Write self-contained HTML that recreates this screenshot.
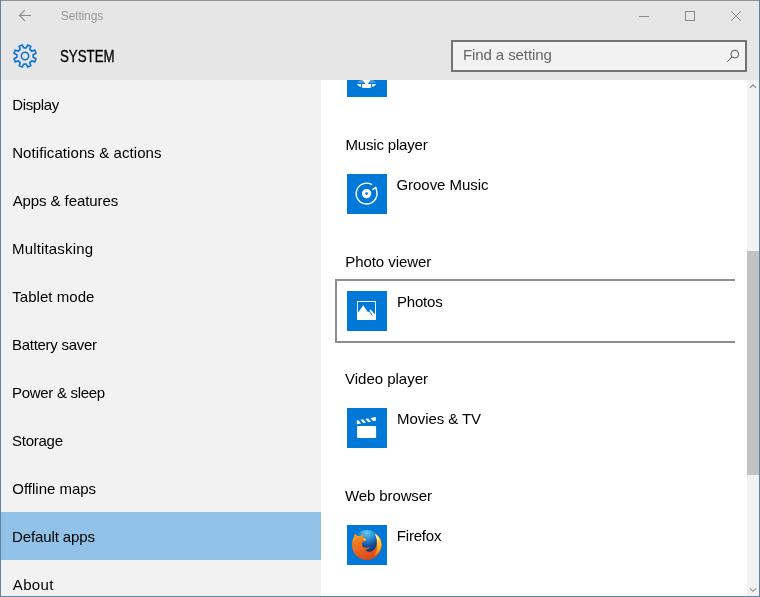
<!DOCTYPE html>
<html>
<head>
<meta charset="utf-8">
<title>Settings</title>
<style>
html,body{margin:0;padding:0;}
body{width:760px;height:597px;overflow:hidden;background:#fff;font-family:"Liberation Sans",sans-serif;position:relative;}
.abs{position:absolute;}
#win{will-change:transform;position:absolute;left:0;top:0;width:760px;height:597px;overflow:hidden;background:#fff;}
#header{left:0;top:0;width:760px;height:80px;background:#e6e6e6;}
#sidebar{left:0;top:80px;width:321px;height:517px;background:#f2f2f2;}
#content{left:321px;top:80px;width:426px;height:517px;background:#fff;overflow:hidden;}
#track{left:747px;top:80px;width:12px;height:517px;background:#f2f2f2;}
#thumb{left:747px;top:251px;width:12px;height:224px;background:#c2c2c2;}
.t{position:absolute;white-space:nowrap;line-height:20px;font-size:15px;color:#000;transform-origin:0 50%;}
.nav{left:12px;}
.sel{left:1px;top:512px;width:320px;height:48px;background:#91c1e7;}
.ico{position:absolute;left:347px;width:40px;height:40px;background:#0078d7;}
.bl{left:0;top:0;width:1px;height:597px;background:#62839f;}
.br{left:759px;top:0;width:1px;height:597px;background:#62839f;}
.bt{left:0;top:0;width:760px;height:1px;background:#8f8f8f;}
.bb{left:0;top:596px;width:760px;height:1px;background:#62839f;}
</style>
</head>
<body>
<div id="win">
  <div id="header" class="abs"></div>
  <div id="sidebar" class="abs"></div>
  <div id="content" class="abs"><div class="ico" id="i0" style="left:26px;top:-23px;"><svg width="40" height="40" viewBox="0 0 40 40" style="position:absolute;left:0;top:0">
<defs><clipPath id="mlo"><rect x="0" y="26.9" width="40" height="10"/></clipPath><clipPath id="mup"><rect x="0" y="20" width="40" height="5.8"/></clipPath></defs>
<ellipse cx="19.5" cy="26.4" rx="9.7" ry="4.4" fill="#fff" clip-path="url(#mlo)"/>
<ellipse cx="19.5" cy="26.4" rx="9.4" ry="4.2" fill="#fff" opacity="0.32" clip-path="url(#mup)"/>
<path d="M15.2 22.5H23.8L21 26.4L23.8 30.9H15.2L18.2 26.4Z" fill="#fff"/>
<path d="M14.6 27V30.6M24.6 27V30.6" stroke="#0078d7" stroke-width="1"/>
</svg></div></div>
  <div id="track" class="abs"></div>
  <div id="thumb" class="abs"></div>

  <!-- title bar -->
  <svg class="abs" style="left:17px;top:8px" width="16" height="16" viewBox="0 0 16 16" fill="none" stroke="#8a8a8a" stroke-width="1.1">
    <path d="M2.5 7.5H14M7.8 2.2L2.5 7.5L7.8 12.8"/>
  </svg>
  <div class="t" id="ttl" style="left:60.8px;top:6px;font-size:12px;color:#999;letter-spacing:-0.14px;">Settings</div>
  <svg class="abs" style="left:630px;top:4px" width="120" height="24" viewBox="0 0 120 24" fill="none" stroke="#8a8a8a" stroke-width="1">
    <path d="M9 12.5H19"/>
    <rect x="55.5" y="7.5" width="9" height="9"/>
    <path d="M101 7L111 17M111 7L101 17"/>
  </svg>

  <!-- gear + SYSTEM -->
  <svg class="abs" style="left:11px;top:42px" width="28" height="28" viewBox="-14 -14 28 28" fill="none" stroke="#0c74d4" stroke-width="1.6" stroke-linejoin="round">
    <path d="M8.10,1.28 L11.06,2.76 L9.77,5.87 L6.63,4.82 L4.82,6.63 L5.87,9.77 L2.76,11.06 L1.28,8.10 L-1.28,8.10 L-2.76,11.06 L-5.87,9.77 L-4.82,6.63 L-6.63,4.82 L-9.77,5.87 L-11.06,2.76 L-8.10,1.28 L-8.10,-1.28 L-11.06,-2.76 L-9.77,-5.87 L-6.63,-4.82 L-4.82,-6.63 L-5.87,-9.77 L-2.76,-11.06 L-1.28,-8.10 L1.28,-8.10 L2.76,-11.06 L5.87,-9.77 L4.82,-6.63 L6.63,-4.82 L9.77,-5.87 L11.06,-2.76 L8.10,-1.28Z"/>
    <circle cx="0" cy="0" r="3.7"/>
  </svg>
  <div class="t" id="sys" style="left:59.5px;top:46.5px;font-size:16px;transform:scaleX(0.83);-webkit-text-stroke:0.3px #000;">SYSTEM</div>

  <!-- search -->
  <div class="abs" style="left:451px;top:40px;width:292px;height:28px;border:2px solid #737373;background:#f2f2f2;"></div>
  <div class="t" id="find" style="left:462.9px;top:45px;color:#666;letter-spacing:-0.08px;">Find a setting</div>
  <svg class="abs" style="left:724px;top:46px" width="18" height="18" viewBox="0 0 18 18" fill="none" stroke="#555" stroke-width="1">
    <circle cx="10.8" cy="8.1" r="3.9"/><path d="M8 11L3.2 15.8"/>
  </svg>

  <!-- sidebar -->
  <div class="abs sel"></div>
  <div class="t nav" id="n0" style="top:95px;left:12.2px;letter-spacing:-0.35px;">Display</div>
  <div class="t nav" id="n1" style="top:143px;left:12.20px;letter-spacing:0.08px;">Notifications &amp; actions</div>
  <div class="t nav" id="n2" style="top:191px;left:12.70px;letter-spacing:-0.09px;">Apps &amp; features</div>
  <div class="t nav" id="n3" style="top:239px;left:12.00px;letter-spacing:0.17px;">Multitasking</div>
  <div class="t nav" id="n4" style="top:287px;left:12.30px;letter-spacing:0.04px;">Tablet mode</div>
  <div class="t nav" id="n5" style="top:335px;left:12.00px;letter-spacing:-0.28px;">Battery saver</div>
  <div class="t nav" id="n6" style="top:383px;left:12.00px;letter-spacing:-0.30px;">Power &amp; sleep</div>
  <div class="t nav" id="n7" style="top:431px;left:12.00px;letter-spacing:-0.25px;">Storage</div>
  <div class="t nav" id="n8" style="top:479px;left:12.30px;letter-spacing:-0.01px;">Offline maps</div>
  <div class="t nav" id="n9" style="top:527px;left:11.90px;letter-spacing:-0.09px;">Default apps</div>
  <div class="t nav" id="n10" style="top:575px;left:12.85px;letter-spacing:0.32px;">About</div>

  <!-- content -->

  <div class="t" id="h1" style="left:345.40px;top:135px;letter-spacing:-0.17px;">Music player</div>
  <div class="ico" id="i1" style="top:174px;"><svg width="40" height="40" viewBox="0 0 40 40" style="position:absolute;left:0;top:0" fill="none" stroke="#fff" stroke-width="1.45" stroke-linecap="round" stroke-linejoin="round">
<path d="M24.48 10.42A10.4 10.4 0 1 0 29.77 17.44L28.9 13.4L25.9 15.4"/>
<circle cx="19.6" cy="19.6" r="3.05" stroke-width="3.3"/>
</svg></div>
  <div class="t" id="a1" style="left:396.50px;top:175px;letter-spacing:-0.05px;">Groove Music</div>

  <div class="abs" style="left:335px;top:279px;width:420px;height:60px;border:2px solid #8e8e8e;clip-path:inset(0 24px 0 0);"></div>
  <div class="t" id="h2" style="left:345.30px;top:252px;letter-spacing:-0.07px;">Photo viewer</div>
  <div class="ico" id="i2" style="top:291px;"><svg width="40" height="40" viewBox="0 0 40 40" style="position:absolute;left:0;top:0">
<rect x="10.5" y="10.5" width="18" height="18" fill="none" stroke="#fff" stroke-width="1"/>
<path d="M10 29V23.2L16.2 14.3L21.2 21.4L23.5 18.2L29 24.8V29Z" fill="#fff"/>
<path d="M21.9 19.4L25.2 24.4" stroke="#0078d7" stroke-width="0.9"/>
</svg></div>
  <div class="t" id="a2" style="left:396.90px;top:292px;letter-spacing:-0.18px;">Photos</div>

  <div class="t" id="h3" style="left:345.00px;top:369px;letter-spacing:-0.01px;">Video player</div>
  <div class="ico" id="i3" style="top:408px;"><svg width="40" height="40" viewBox="0 0 40 40" style="position:absolute;left:0;top:0">
<rect x="10.1" y="17.9" width="19" height="12.1" rx="1" fill="#fff"/>
<path d="M9.6 12.5L28.8 8.9V12.7L9.9 16.3Z" fill="#fff"/>
<path d="M12 11.4L15.8 16M16.9 10.5L20.7 15.1M21.8 9.6L25.6 14.2" stroke="#0078d7" stroke-width="2"/>
</svg></div>
  <div class="t" id="a3" style="left:397.00px;top:409px;letter-spacing:-0.07px;">Movies &amp; TV</div>

  <div class="t" id="h4" style="left:345.00px;top:486px;letter-spacing:-0.11px;">Web browser</div>
  <div class="ico" id="i4" style="top:525px;"><svg width="40" height="40" viewBox="0 0 40 40" style="position:absolute;left:0;top:0">
<defs>
<radialGradient id="gl" cx="0.5" cy="0.08" r="0.8"><stop offset="0" stop-color="#6cc8f0"/><stop offset="0.3" stop-color="#2f9adb"/><stop offset="0.62" stop-color="#14509c"/><stop offset="1" stop-color="#0c2c6c"/></radialGradient>
<linearGradient id="fx" x1="0.2" y1="0" x2="0.6" y2="1"><stop offset="0" stop-color="#f58f22"/><stop offset="0.45" stop-color="#ee6f1c"/><stop offset="1" stop-color="#d8431b"/></linearGradient>
<linearGradient id="fy" x1="0.3" y1="0" x2="0.5" y2="1"><stop offset="0" stop-color="#fffbe0"/><stop offset="0.3" stop-color="#ffe24a"/><stop offset="0.7" stop-color="#fbb21f"/><stop offset="1" stop-color="#ee7a1c" stop-opacity="0.6"/></linearGradient>
</defs>
<circle cx="19.8" cy="18.6" r="13.6" fill="url(#gl)"/>
<path d="M8.4 8.4L9.7 10.7C11 11.1 13 10.9 14.4 10.7L16.4 9L15.8 12.4L19.4 13.7L18.8 15.7L16.1 16.4C15 17.5 14.8 18.5 15.1 19.4C15.2 20.6 15.4 21.4 15.4 21.4C17 22.8 20 23 22.8 22.1C22.4 23.4 21.5 24.3 18.1 25.1C20 27.6 25 27.7 28.2 23.5C29.6 21 30 17 29.5 14C29.2 12 28.8 10.5 28.1 9.4L28.8 8.7C32.5 11 34.8 15 34.8 19.6C34.8 24 32.8 28.4 29.5 31.2C26.5 33.8 23 34.9 20 34.9C14 34.9 8.5 31.5 6.2 26C4.6 22 4.7 17 6.2 13.5C6.8 12 7.4 10 8.4 8.4Z" fill="url(#fx)"/>
<path d="M28.5 9.2C31.8 11.2 34.2 15 34.4 19.4C34.5 22.8 33.2 26 31 28.4C29.6 29.8 28 30.6 26.8 30.8C28.8 28.6 30 25.6 30.3 22.6C30.6 19.6 30.4 16.4 29.8 13.6C29.5 12 29.1 10.4 28.5 9.2Z" fill="url(#fy)"/>
<path d="M28.3 9.3C30 11.4 31 14.6 31 18C30.4 15 29.6 12 28 9.8Z" fill="#fff" opacity="0.85"/>
<path d="M8.4 8.4L9.7 10.7C11 11.1 13 10.9 14.4 10.7L16.4 9L15.8 12.4C13 12.2 10 13 7.6 15.4C7 16 6.4 17 5.8 18C5.6 16 6 14.5 6.4 13.2C6.9 11.8 7.5 10 8.4 8.4Z" fill="#f9a62c" opacity="0.55"/>
<path d="M16.2 13.2L18.9 14.2L18.5 15.3L16.4 15.2Z" fill="#fbe3c0" opacity="0.8"/>
</svg></div>
  <div class="t" id="a4" style="left:396.80px;top:526px;letter-spacing:-0.20px;">Firefox</div>

  <!-- scroll arrows -->
  <svg class="abs" style="left:747px;top:80px" width="12" height="12" viewBox="0 0 12 12" fill="none" stroke="#8a8a8a" stroke-width="1.2"><path d="M3 7.8L6 4.8L9 7.8"/></svg>
  <svg class="abs" style="left:747px;top:583px" width="12" height="12" viewBox="0 0 12 12" fill="none" stroke="#909090" stroke-width="1.1"><path d="M3 5.3L6 8.3L9 5.3"/></svg>

  <!-- window borders -->
  <div class="abs bt"></div><div class="abs bl"></div><div class="abs br"></div><div class="abs bb"></div>
</div>
</body>
</html>
